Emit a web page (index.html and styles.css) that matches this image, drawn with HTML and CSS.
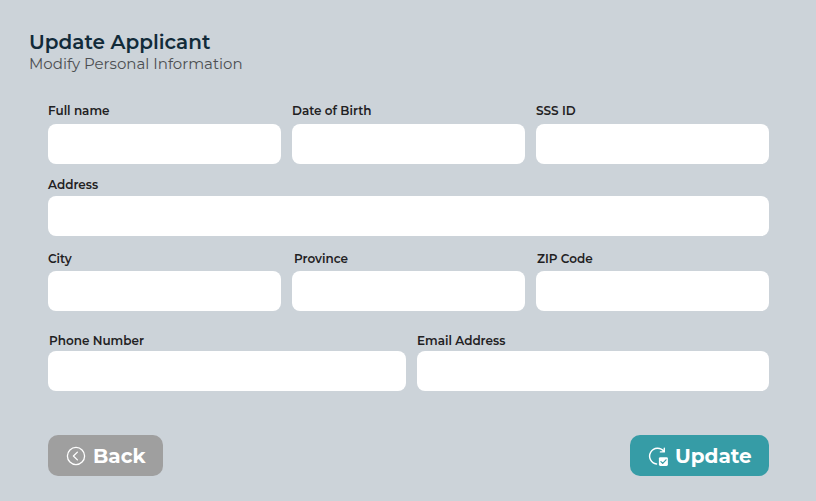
FILE: index.html
```html
<!DOCTYPE html>
<html lang="en">
<head>
<meta charset="utf-8">
<title>Update Applicant</title>
<link rel="stylesheet" href="styles.css">
</head>
<body>
<main class="page">
  <header class="heading">
    <h1 class="title">Update Applicant</h1>
    <p class="subtitle">Modify Personal Information</p>
  </header>
  <form class="form">
    <div class="row row-thirds row-personal">
      <label class="field"><span class="label">Full name</span><input class="input" type="text"></label>
      <label class="field"><span class="label">Date of Birth</span><input class="input" type="text"></label>
      <label class="field"><span class="label">SSS ID</span><input class="input" type="text"></label>
    </div>
    <div class="row row-address">
      <label class="field"><span class="label">Address</span><input class="input" type="text"></label>
    </div>
    <div class="row row-thirds row-place">
      <label class="field"><span class="label">City</span><input class="input" type="text"></label>
      <label class="field"><span class="label province">Province</span><input class="input" type="text"></label>
      <label class="field"><span class="label zip">ZIP Code</span><input class="input" type="text"></label>
    </div>
    <div class="row row-halves row-contact">
      <label class="field"><span class="label phone">Phone Number</span><input class="input" type="text"></label>
      <label class="field"><span class="label">Email Address</span><input class="input" type="text"></label>
    </div>
    <div class="actions">
      <button class="button back" type="button">
        <svg class="icon" width="20" height="20" viewBox="0 0 20 20" fill="none" stroke="#fff" stroke-width="1.3" stroke-linecap="round" stroke-linejoin="round"><circle cx="10" cy="10" r="8.6"/><path d="M11.4 6.1 7.4 10l4 3.9"/></svg>
        <span>Back</span>
      </button>
      <button class="button update" type="button">
        <svg class="icon" width="20" height="20" viewBox="0 0 20 20" fill="none" stroke="#fff" stroke-width="1.4" stroke-linecap="round" stroke-linejoin="round"><path d="M8.6 18A7.9 7.9 0 1 1 16 5.6M16.3 2.2v3.7h-3.9"/><rect x="10.9" y="11.2" width="9" height="8.8" rx="1.4" fill="#fff" stroke="none"/><path d="m12.9 15.6 1.8 1.7 3.3-3.5" stroke="#369ca6" stroke-width="1.2"/></svg>
        <span>Update</span>
      </button>
    </div>
  </form>
</main>
</body>
</html>
```
FILE: styles.css
```css
* { box-sizing: border-box; }
body { margin: 0; background: #ccd3d9; font-family: Montserrat, Inter, "Liberation Sans", sans-serif; }
.page { height: 501px; padding-top: 30px; }
.heading { padding-left: 29px; }
.title { margin: 0; font-size: 20px; line-height: 24px; font-weight: 600; color: #122b39; white-space: nowrap; }
.subtitle { margin: 0; font-size: 15px; line-height: 20px; font-weight: 400; color: #4c4f52; }
.form { width: 721px; margin: 27px 0 0 48px; }
.row { display: grid; gap: 11px; }
.row-thirds { grid-template-columns: repeat(3, 1fr); }
.row-halves { grid-template-columns: 358px 352px; }
.field { display: flex; flex-direction: column; }
.label { height: 23px; font-size: 12px; line-height: 20px; font-weight: 600; color: #1f2123; white-space: nowrap; }
.province { padding-left: 2px; }
.zip { padding-left: 1px; }
.phone { padding-left: 1px; }
.input { width: 100%; height: 40px; padding: 0 12px; border: 0; border-radius: 8px; background: #fff; outline: 0; font: inherit; }
.row-address { margin-top: 11px; }
.row-address .label { height: 21px; }
.row-place { margin-top: 13px; }
.row-place .label { height: 22px; }
.row-contact { margin-top: 20px; }
.row-contact .label { height: 20px; }
.actions { display: flex; justify-content: space-between; margin-top: 44px; }
.button { display: flex; align-items: center; gap: 7px; height: 41px; padding: 0 0 0 18px; border: 0; border-radius: 10px; color: #fff; font-family: inherit; font-size: 20px; font-weight: 700; line-height: 24px; }
.icon { flex: none; overflow: visible; }
.back { width: 115px; background: #9f9f9f; }
.update { width: 139px; background: #369ca6; }
```
